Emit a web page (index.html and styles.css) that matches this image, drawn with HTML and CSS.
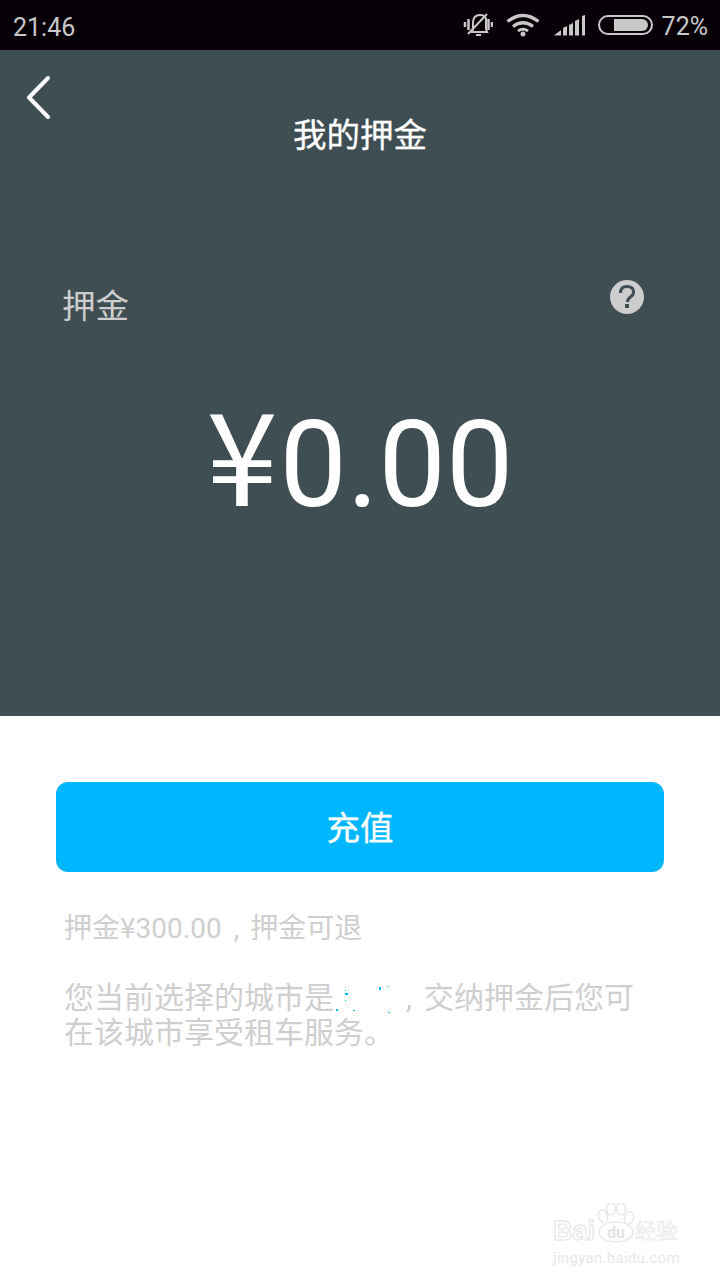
FILE: index.html
```html
<!DOCTYPE html>
<html>
<head>
    <meta charset="UTF-8">
    <title>我的押金</title>
    <link rel="stylesheet" href="styles.css">
</head>
<body>
    <div class="status">
        <span class="hora">21:46</span>
        <div class="status-icons">
            <svg class="ic-mudo" width="30" height="26" viewBox="0 0 30 26" fill="none" stroke="#c8c8c8" stroke-width="2">
                <path d="M9 20 q1-2 1-5 v-4 q0-8 7-8 q5 0 6 4 v9 q0 2 1 4z"/>
                <path d="M13 23 h5"/>
                <path d="M5 22 L24 2"/>
                <path d="M2 10v5M5.500 7v11M25.500 7v11M29 10v5" stroke-width="2.500"/>
            </svg>
            <svg class="ic-wifi" width="34" height="24" viewBox="0 0 34 24" fill="none" stroke="#c8c8c8" stroke-width="3.400">
                <path d="M1.500 8.500 q15.500-12 31 0"/>
                <path d="M7 13.500 q10-7.500 20 0"/>
                <path d="M12 18 q5-3.500 10 0" stroke-width="3"/>
                <circle cx="17" cy="21" r="2.500" fill="#c8c8c8" stroke="none"/>
            </svg>
            <svg class="ic-sinal" width="32" height="22" viewBox="0 0 32 22" fill="#c8c8c8">
                <path d="M0 21.500 L7 16 V21.500z"/>
                <path d="M9 21.500 V14 L13 12 V21.500z"/>
                <path d="M15 21.500 V11 L19 9 V21.500z"/>
                <path d="M21 21.500 V7 L25 5 V21.500z"/>
                <path d="M28 21.500 V2 L31 1 V21.500z"/>
            </svg>
            <div class="bateria"><div class="bateria-nivel"></div></div>
            <span class="porcento">72%</span>
        </div>
    </div>

    <div class="topo">
        <div class="barra">
            <svg class="voltar" width="26" height="46" viewBox="0 0 26 46" fill="none" stroke="#fff" stroke-width="4" stroke-linecap="round" stroke-linejoin="round">
                <path d="M22 3 L3 22.500 L22 42"/>
            </svg>
            <h2 class="titulo">我的押金</h2>
        </div>
        <div class="linha-deposito">
            <span class="rotulo">押金</span>
            <svg class="ajuda" width="34" height="34" viewBox="0 0 34 34">
                <circle cx="17" cy="17" r="17" fill="#cdcdcd"/>
                <path d="M10.500 13 q0-6.500 6.500-6.500 q6.500 0 6.500 5.500 q0 3-3 5 q-3 2-3 5" fill="none" stroke="#3f4e53" stroke-width="3"/>
                <rect x="15" y="24" width="4" height="4" fill="#3f4e53"/>
            </svg>
        </div>
        <div class="valor"><span class="yen yen-grande">¥</span>0.00</div>
    </div>

    <div class="conteudo">
        <div class="botao">充值</div>
        <p class="nota nota-um">押金<span class="yen">¥</span>300.00<span class="virgula">,</span>押金可退</p>
        <p class="nota nota-dois">您当前选择的城市是<svg class="cidade" width="72" height="30" viewBox="0 0 72 30" fill="#00b7ff">
                <rect x="11" y="9" width="3" height="2"/>
                <rect x="11" y="6" width="1" height="1"/>
                <rect x="11" y="16" width="1" height="1"/>
                <rect x="2" y="25" width="2" height="2"/>
                <rect x="19" y="26" width="2" height="1"/>
                <rect x="45" y="3" width="2" height="3"/>
                <rect x="53" y="2" width="1" height="1"/>
                <rect x="54" y="28" width="2" height="1"/>
            </svg>,<span class="virgula-fim"></span>交纳押金后您可<br>在该城市享受租车服务。</p>
        <div class="marca">
            <div class="marca-logo">
                <span class="bai">Bai</span>
                <svg class="pata" width="38" height="40" viewBox="0 0 38 40" fill="#fff" stroke="#e4e4e4" stroke-width="1.200">
                    <ellipse cx="6" cy="13" rx="4.500" ry="6.500" transform="rotate(-15 6 13)"/>
                    <ellipse cx="14" cy="6" rx="4.500" ry="6"/>
                    <ellipse cx="24" cy="6" rx="4.500" ry="6"/>
                    <ellipse cx="32" cy="15" rx="4.500" ry="6.500" transform="rotate(20 32 15)"/>
                    <ellipse cx="19" cy="29" rx="17" ry="10"/>
                    <text x="19" y="35" text-anchor="middle" class="du">du</text>
                </svg>
                <span class="jingyan">经验</span>
            </div>
            <div class="marca-url">jingyan.baidu.com</div>
        </div>
    </div>
</body>
</html>
```

FILE: styles.css
```css
* {
    box-sizing: border-box;
}

body {
    margin: 0;
    height: 1280px;
    overflow: hidden;
    font-family: Roboto, "Noto Sans CJK SC", sans-serif;
    background-color: #fff;
}

.yen {
    font-family: "Noto Sans CJK SC", sans-serif;
}

.status {
    height: 50px;
    background-color: #060006;
    color: #c8c8c8;
    display: flex;
    align-items: center;
    justify-content: space-between;
    padding: 0 12px 0 13px;
    font-size: 25px;
}

.hora {
    padding-top: 4px;
}

.status-icons {
    display: flex;
    align-items: center;
}

.ic-mudo {
    margin-right: 13px;
}

.ic-wifi {
    margin-right: 14px;
}

.ic-sinal {
    margin-right: 12px;
}

.bateria {
    width: 55px;
    height: 20px;
    border: 2px solid #c8c8c8;
    border-radius: 10px;
    padding: 2px 3px 2px 14px;
    margin-right: 9px;
}

.bateria-nivel {
    height: 100%;
    background-color: #c8c8c8;
    border-radius: 0 6px 6px 0;
}

.porcento {
    padding-top: 2px;
}

.topo {
    height: 666px;
    background-color: #3f4e53;
}

.barra {
    height: 122px;
    padding-top: 25px;
    display: flex;
    justify-content: center;
    position: relative;
}

.voltar {
    position: absolute;
    left: 26px;
    top: 25px;
}

.titulo {
    margin: 41px 0 0;
    color: #fff;
    font-size: 33.500px;
    line-height: 40px;
    font-weight: 400;
    -webkit-text-stroke: 0.3px #fff;
}

.linha-deposito {
    display: flex;
    justify-content: space-between;
    align-items: flex-start;
    padding: 108px 76px 0 62px;
}

.rotulo {
    color: #cdcdcd;
    font-size: 33.500px;
    line-height: 48px;
    margin-top: 3px;
}

.valor {
    margin-top: 50px;
    text-align: center;
    color: #fff;
    font-size: 120px;
    line-height: 140px;
}

.yen-grande {
    font-size: 128px;
    margin-right: 2px;
}

.conteudo {
    padding: 66px 56px 0;
    position: relative;
    height: 564px;
}

.botao {
    height: 90px;
    padding-bottom: 4px;
    background-color: #00b7ff;
    border-radius: 12px;
    color: #fff;
    font-size: 33.500px;
    -webkit-text-stroke: 0.3px #fff;
    display: flex;
    align-items: center;
    justify-content: center;
}

.nota {
    margin: 0 0 0 8px;
    color: #cfcfcf;
    line-height: 36px;
    white-space: nowrap;
}

.nota-um {
    font-size: 28px;
    margin-top: 36px;
    margin-bottom: 33px;
}

.virgula {
    margin: 0 11px 0 12px;
}

.nota-dois {
    font-size: 30px;
    line-height: 35px;
}

.cidade {
    vertical-align: -6px;
}

.virgula-fim {
    display: inline-block;
    width: 12px;
}

.marca {
    position: absolute;
    left: 553px;
    top: 487px;
    width: 127px;
    color: #e4e4e4;
}

.marca-logo {
    display: flex;
    align-items: flex-end;
    height: 40px;
}

.bai {
    font-family: "Liberation Sans", sans-serif;
    font-size: 27px;
    line-height: 24px;
    font-weight: 700;
    color: #fff;
    -webkit-text-stroke: 1px #e4e4e4;
    margin-right: 2px;
}

.du {
    font-size: 16px;
    font-weight: 700;
    fill: #e4e4e4;
    stroke: none;
}

.jingyan {
    font-size: 21px;
    line-height: 24px;
    color: #fff;
    -webkit-text-stroke: 0.6px #e4e4e4;
}

.marca-url {
    margin-top: 6px;
    font-size: 15px;
    line-height: 18px;
    letter-spacing: 0.300px;
    color: #e8e8e8;
}
```
